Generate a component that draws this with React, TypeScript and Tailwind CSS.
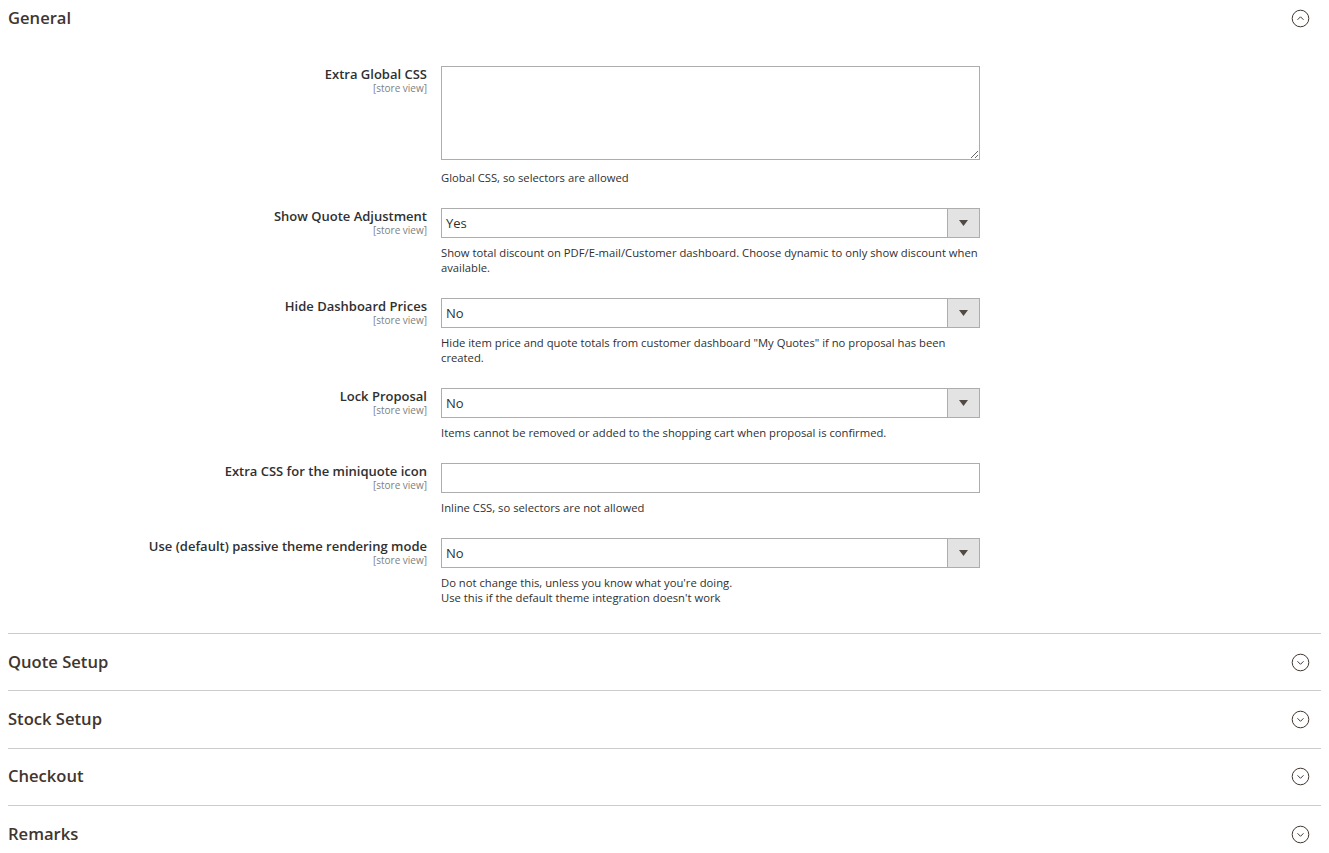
import React from "react";

const font = { fontFamily: '"Open Sans", "Liberation Sans", sans-serif' };

function CircleChevron({ up }: { up?: boolean }) {
  return (
    <svg width="19" height="19" viewBox="0 0 19 19" fill="none">
      <circle cx="9.5" cy="9.5" r="8.3" stroke="#41362f" strokeWidth="1" />
      {up ? (
        <path d="M6.5 10.8 L9.5 7.8 L12.5 10.8" stroke="#41362f" strokeWidth="1" fill="none" />
      ) : (
        <path d="M6.5 8.3 L9.5 11.3 L12.5 8.3" stroke="#41362f" strokeWidth="1" fill="none" />
      )}
    </svg>
  );
}

function Label({ text }: { text: string }) {
  return (
    <div className="w-[419px] shrink-0 text-right">
      <div className="text-[13px] leading-[17px] font-semibold text-[#303030]">{text}</div>
      <div className="text-[10px] leading-[11px] text-[#808080]">[store view]</div>
    </div>
  );
}

function Select({ value }: { value: string }) {
  return (
    <div className="flex h-[30px] w-[539px] border border-[#adadad] bg-white">
      <div className="flex-1 flex items-center pl-[4px] pt-[2px] text-[13px] text-[#303030]">{value}</div>
      <div className="w-[32px] bg-[#e3e3e3] border-l border-[#adadad] flex items-center justify-center">
        <svg width="9" height="6" viewBox="0 0 9 6">
          <path d="M0 0 L9 0 L4.5 6 Z" fill="#514943" />
        </svg>
      </div>
    </div>
  );
}

function Note({ children, mt = "mt-[7px]" }: { children: React.ReactNode; mt?: string }) {
  return <div className={`${mt} text-[11.25px] leading-[15px] text-[#303030]`}>{children}</div>;
}

function Row({ label, children, pb = "pb-[23px]" }: { label: string; children: React.ReactNode; pb?: string }) {
  return (
    <div className={`flex ${pb}`}>
      <Label text={label} />
      <div className="ml-[14px] w-[539px]">{children}</div>
    </div>
  );
}

function Collapsed({ title }: { title: string }) {
  return (
    <div className="border-t border-[#cccccc] h-[57.3px] flex items-center justify-between pr-[11px]">
      <div className="text-[16.6px] font-semibold text-[#41362f]">{title}</div>
      <CircleChevron />
    </div>
  );
}

export default function App() {
  return (
    <div className="bg-white w-[1329px] h-[853px] overflow-hidden px-2" style={font}>
      <div className="h-[36px] flex items-center justify-between pr-[11px]">
        <div className="text-[16.6px] font-semibold text-[#41362f]">General</div>
        <CircleChevron up />
      </div>
      <div className="pt-[30px]">
        <Row label="Extra Global CSS">
          <textarea className="block w-[539px] h-[94px] border border-[#adadad] bg-white outline-none" />
          <Note mt="mt-[10px]">Global CSS, so selectors are allowed</Note>
        </Row>
        <Row label="Show Quote Adjustment">
          <Select value="Yes" />
          <Note>
            Show total discount on PDF/E-mail/Customer dashboard. Choose dynamic to only show discount when available.
          </Note>
        </Row>
        <Row label="Hide Dashboard Prices">
          <Select value="No" />
          <Note>
            Hide item price and quote totals from customer dashboard "My Quotes" if no proposal has been created.
          </Note>
        </Row>
        <Row label="Lock Proposal">
          <Select value="No" />
          <Note>Items cannot be removed or added to the shopping cart when proposal is confirmed.</Note>
        </Row>
        <Row label="Extra CSS for the miniquote icon">
          <input className="block w-[539px] h-[30px] border border-[#adadad] bg-white outline-none" />
          <Note>Inline CSS, so selectors are not allowed</Note>
        </Row>
        <Row label="Use (default) passive theme rendering mode" pb="pb-[28px]">
          <Select value="No" />
          <Note>
            Do not change this, unless you know what you're doing.
            <br />
            Use this if the default theme integration doesn't work
          </Note>
        </Row>
      </div>
      <Collapsed title="Quote Setup" />
      <Collapsed title="Stock Setup" />
      <Collapsed title="Checkout" />
      <Collapsed title="Remarks" />
    </div>
  );
}
